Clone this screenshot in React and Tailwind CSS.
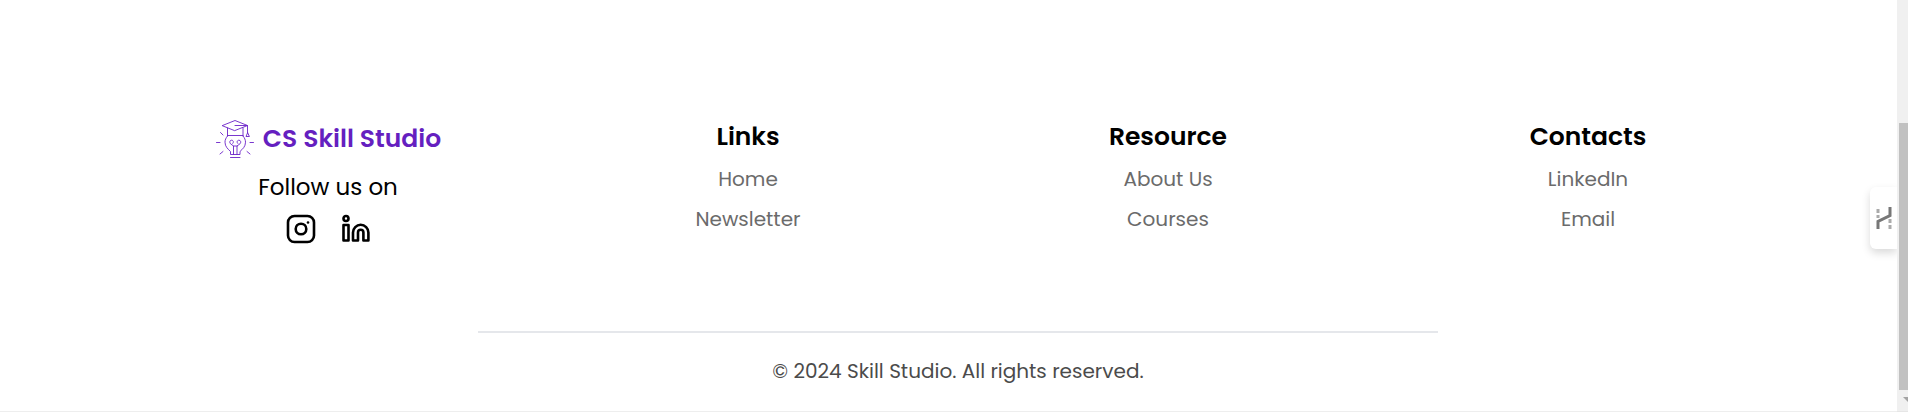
const columns = [
  { title: "Links", items: ["Home", "Newsletter"] },
  { title: "Resource", items: ["About Us", "Courses"] },
  { title: "Contacts", items: ["LinkedIn", "Email"] },
];

function LogoMark() {
  return (
    <svg viewBox="0 0 40 40" className="size-10 shrink-0" fill="none" stroke="#6b21c8" strokeWidth="0.9" strokeLinecap="round" strokeLinejoin="round" aria-hidden="true">
      <path d="M7.500 6.500 20 1.500 32.500 6.500 20 11.500Z" />
      <path d="M20 6.500h12.500v7.500M32.500 14l-1.500 3.500h3Z" />
      <path d="M12.500 9v8M28 9v8M12.500 16.500H28" />
      <path d="M12.500 17c-1.700 2-2.500 4-2.500 6.200 0 4.600 3 6.800 5.500 9.300V35.500h9.500v-3c2.500-2.500 5.500-4.700 5.500-9.300 0-2.200-.8-4.200-2.500-6.200" />
      <path d="M18.500 35.500V27L15.500 24.800c-1.300-1.300-.7-3.600 1-3.600s2.700 1.800 1.200 3.300M22 35.500V27l3-2.200c1.300-1.300.7-3.600-1-3.600s-2.700 1.800-1.200 3.300M18.500 27H22" />
      <path d="M15.500 38.500h9.500M1.500 23.500h3.500M35 23.500h3.500M5.500 13.500l2.500 2.500M5 35l3-2.500M35 35l-3-2.500" />
    </svg>
  );
}

export default function App() {
  return (
    <div className="flex bg-white font-['Poppins','Inter',sans-serif] text-black">
      <div className="min-w-0 flex-1 border-b border-[#eeeeee]">
        <footer className="pt-[119px] pr-[99px] pb-[26px] pl-[118px]">
          <div className="grid grid-cols-4 text-center">
            <section className="flex flex-col items-center">
              <a href="#home" className="flex items-center gap-2 text-[25px] leading-10 font-semibold text-[#651fc0]">
                <LogoMark />
                CS Skill Studio
              </a>
              <p className="mt-3 text-[23px] leading-8">Follow us on</p>
              <div className="mt-2 flex gap-[19px]">
                <a href="#instagram" aria-label="Instagram">
                  <svg viewBox="0 0 36 36" className="size-9" fill="none" stroke="currentColor" strokeWidth="2.6" aria-hidden="true">
                    <rect x="5" y="5" width="26" height="26" rx="6.500" />
                    <circle cx="18" cy="18" r="5.300" />
                    <circle cx="25" cy="11.500" r="1.300" fill="currentColor" stroke="none" />
                  </svg>
                </a>
                <a href="#linkedin" aria-label="LinkedIn profile">
                  <svg viewBox="0 0 36 36" className="size-9" fill="none" stroke="currentColor" strokeWidth="2.600" strokeLinejoin="round" aria-hidden="true">
                    <circle cx="8" cy="7.500" r="2.500" />
                    <path d="M5.500 14h5v15.500h-5ZM15 29.500V21.500a7.700 7.700 0 0 1 15.400 0v8h-5v-8a2.700 2.700 0 0 0-5.400 0v8Z" />
                  </svg>
                </a>
              </div>
            </section>
            {columns.map((column) => (
              <nav key={column.title} aria-label={column.title}>
                <h2 className="text-[25px] leading-9 font-semibold">{column.title}</h2>
                <ul className="mt-1 text-xl leading-10 text-[#6b6b6b]">
                  {column.items.map((item) => (
                    <li key={item}><a href={"#" + item}>{item}</a></li>
                  ))}
                </ul>
              </nav>
            ))}
          </div>
          <hr className="mx-auto mt-[84px] w-4/7 border-t-2 border-gray-200" />
          <p className="mt-6 text-center text-xl leading-7 text-[#4b4b4b]">© 2024 Skill Studio. All rights reserved.</p>
        </footer>
      </div>
      <aside className="flex w-[11px] flex-col items-end border-b border-[#e6e6e6] bg-[#f0f0f0] pt-[123px]" aria-hidden="true">
        <div className="h-[267px] w-[9px] bg-[#c1c1c1]" />
        <svg viewBox="0 0 5 5" className="mt-[7px] h-[5px] w-[5px]"><path d="M0 0h5v5Z" fill="#a3a3a3" /></svg>
      </aside>
      <button type="button" aria-label="Open panel" className="fixed top-[187px] right-[11px] flex h-[62px] w-[27px] items-center justify-center rounded-l-md bg-white shadow-[0_4px_8px_rgba(0,0,0,0.15)] [clip-path:inset(-12px_0_-12px_-12px)]">
        <svg viewBox="0 0 16 22" className="h-[22px] w-4" fill="none" aria-hidden="true">
          <path d="M2 22v-7.500l12-6V0" stroke="#777777" strokeWidth="3" />
          <path d="M2 2v9M14 12v10" stroke="#aaaaaa" strokeWidth="3" strokeDasharray="4 2" />
        </svg>
      </button>
    </div>
  );
}
